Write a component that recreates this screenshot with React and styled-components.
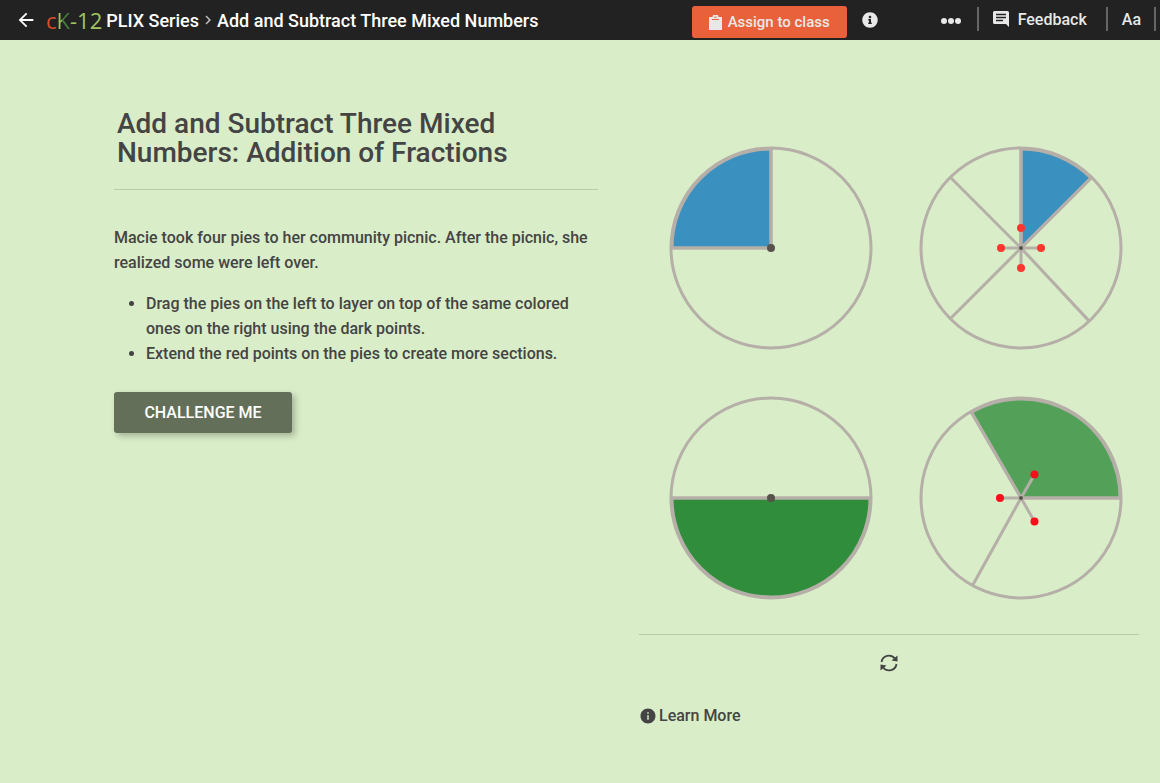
import React from 'react'
import styled, { createGlobalStyle } from 'styled-components'
import { FaInfoCircle } from 'react-icons/fa'
import { MdArrowBack, MdChevronRight, MdInfo } from 'react-icons/md'

const RADIUS = 100

const pies = [
    { id : 'blue-quarter', x : 132, y : 124, fill : '#3a90bf', from : 90, to : 180, spokes : [90, 180], handles : [], dot : 4 },
    { id : 'blue-eighth', x : 382, y : 124, fill : '#3a90bf', from : 45, to : 90, spokes : [45, 90, 135, 225, 313], handles : [0, 90, 180, 270], reach : 20, handleColor : '#fd372d', dot : 2 },
    { id : 'green-half', x : 132, y : 374, fill : '#308d3c', from : 180, to : 360, spokes : [0, 180], handles : [], dot : 4 },
    { id : 'green-third', x : 382, y : 374, fill : '#53a159', from : 0, to : 120, spokes : [0, 120, 241], handles : [60, 180, 300], reach : 27, handleColor : '#fd0d1b', dot : 2 },
]

const polar = (angle, radius) => {
    const rad = angle * Math.PI / 180
    return { x : Math.cos(rad) * radius, y : -Math.sin(rad) * radius }
}

const Pie = ({ pie }) => {
    const inner = RADIUS - 1
    const start = polar(pie.from, inner)
    const end = polar(pie.to, inner)
    const handles = pie.handles.map(angle => polar(angle, pie.reach === 27 && angle === 180 ? 21 : pie.reach))

    return (
        <g transform={`translate(${pie.x} ${pie.y})`}>
            <path
                d={`M0 0L${start.x} ${start.y}A${inner} ${inner} 0 0 0 ${end.x} ${end.y}Z`}
                fill={pie.fill}
                stroke="#b5afa8"
                strokeWidth="3"
            />
            <circle r={RADIUS} fill="none" stroke="#b5afa8" strokeWidth="3" />
            {pie.spokes.map(angle => {
                const tip = polar(angle, RADIUS)
                return <line key={angle} x2={tip.x} y2={tip.y} stroke="#b5afa8" strokeWidth="3" />
            })}
            {handles.map((tip, i) => (
                <line key={i} x2={tip.x} y2={tip.y} stroke="#b5afa8" strokeWidth="3" />
            ))}
            {handles.map((tip, i) => (
                <circle key={i} cx={tip.x} cy={tip.y} r="4" fill={pie.handleColor} />
            ))}
            <circle r={pie.dot} fill="#57534a" />
        </g>
    )
}

const App = () => (
    <>
        <GlobalStyle />
        <TopBar>
            <Crumbs>
                <IconLink href="#back" aria-label="Back"><MdArrowBack size={22} /></IconLink>
                <Logo href="#home">
                    <span className="c">c</span><span className="k">K</span>-12
                </Logo>
                <CrumbLink href="#series">PLIX Series</CrumbLink>
                <MdChevronRight className="chevron" size={18} />
                <CrumbLink href="#lesson">Add and Subtract Three Mixed Numbers</CrumbLink>
            </Crumbs>
            <AssignButton type="button">
                <svg width="13" height="15" viewBox="0 0 13 15">
                    <path d="M0 2h3.500a3 2.500 0 0 1 6 0H13v13H0z" fill="currentColor" />
                    <path d="M3 4.500h7M5.300 2.200h2.400" stroke="#e8613a" strokeWidth="1" />
                </svg>
                Assign to class
            </AssignButton>
            <InfoButton type="button" aria-label="Info"><FaInfoCircle size={16} /></InfoButton>
            <Tools>
                <MoreButton type="button" aria-label="More">
                    <svg width="22" height="8" viewBox="0 0 22 8" fill="currentColor">
                        <circle cx="4" cy="4" r="3" />
                        <circle cx="11" cy="4" r="3" />
                        <circle cx="18" cy="4" r="3" />
                    </svg>
                </MoreButton>
                <FeedbackButton type="button">
                    <svg width="16" height="16" viewBox="0 0 16 16">
                        <path d="M1.500 0h13A1.500 1.500 0 0 1 16 1.500V16l-3-3H1.500A1.500 1.500 0 0 1 0 11.500v-10A1.500 1.500 0 0 1 1.500 0z" fill="currentColor" />
                        <path d="M3 3.500h10M3 6.500h10M3 9.500h7" stroke="#222" strokeWidth="1.300" />
                    </svg>
                    Feedback
                </FeedbackButton>
                <TextSizeButton type="button">Aa</TextSizeButton>
            </Tools>
        </TopBar>
        <Main>
            <Lesson>
                <Title>Add and Subtract Three Mixed Numbers: Addition of Fractions</Title>
                <Intro>
                    Macie took four pies to her community picnic. After the picnic, she realized some were left over.
                </Intro>
                <Steps>
                    <li>Drag the pies on the left to layer on top of the same colored ones on the right using the dark points.</li>
                    <li>Extend the red points on the pies to create more sections.</li>
                </Steps>
                <ChallengeButton type="button">CHALLENGE ME</ChallengeButton>
            </Lesson>
            <Activity>
                <Board viewBox="0 0 500 510" role="img" aria-label="Four fraction pies">
                    {pies.map(pie => <Pie key={pie.id} pie={pie} />)}
                </Board>
                <Controls>
                    <ResetButton type="button" aria-label="Reset">
                        <svg width="18" height="18" viewBox="0 0 18 18">
                            <path d="M1.500 8A7.500 7.500 0 0 1 14.800 4.500M16.500 10A7.500 7.500 0 0 1 3.200 13.500" fill="none" stroke="currentColor" strokeWidth="1.800" />
                            <path d="M17.500 1.500v6l-6-1zM.5 16.500v-6l6 1z" fill="currentColor" />
                        </svg>
                    </ResetButton>
                </Controls>
                <LearnMore href="#learn-more">
                    <MdInfo size={18} />
                    Learn More
                </LearnMore>
            </Activity>
        </Main>
    </>
)

export default App


const GlobalStyle = createGlobalStyle`
*{
    box-sizing: border-box;
}
body{
    margin: 0;
    background-color: #d9edc8;
    color: #444;
    font-family: Roboto, "Liberation Sans", sans-serif;
    font-size: 16px;
    font-weight: 500;
    line-height: 25px;
}
button{
    border: 0;
    padding: 0;
    background: none;
    color: inherit;
    font: inherit;
    cursor: pointer;
}
a{
    color: inherit;
    text-decoration: none;
}
svg{
    display: block;
    flex: none;
}
`

const TopBar = styled.header`
display: flex;
align-items: center;
height: 40px;
padding-left: 15px;
background-color: #222;
color: #e8e8e8;
white-space: nowrap;
`

const Crumbs = styled.nav`
display: flex;
align-items: center;
flex: 1;
.chevron{
    color: #bbb;
}
`

const IconLink = styled.a`
color: #fff;
`

const Logo = styled.a`
margin: 0 4px 0 9px;
color: #a2c462;
font-family: "Open Sans", sans-serif;
font-size: 22px;
font-weight: 400;
.c{
    color: #d6502b;
}
.k{
    background: linear-gradient(90deg, #a2c462 5px, #45803a 5px);
    background-clip: text;
    color: transparent;
}
`

const CrumbLink = styled.a`
color: #fff;
font-size: 18px;
`

const AssignButton = styled.button`
display: flex;
align-items: center;
justify-content: center;
gap: 6px;
width: 155px;
height: 32px;
margin-top: 4px;
border-radius: 3px;
background-color: #e8613a;
font-size: 15px;
`

const InfoButton = styled.button`
margin: 0 62px 0 15px;
`

const Tools = styled.div`
display: flex;
align-items: center;
padding: 0 4px 2px 0;
button{
    height: 24px;
    border-right: 2px solid #666;
}
`

const MoreButton = styled.button`
padding: 4px 15px 0 0;
`

const FeedbackButton = styled.button`
display: flex;
align-items: center;
gap: 9px;
padding: 0 19px 0 14px;
`

const TextSizeButton = styled.button`
padding: 0 13px 0 14px;
`

const Main = styled.main`
display: grid;
grid-template-columns: 484fr 500fr;
gap: 41px;
padding: 69px 21px 0 114px;
`

const Lesson = styled.section`
display: flex;
flex-direction: column;
align-items: flex-start;
`

const Title = styled.h1`
width: 100%;
margin: 0 0 35px;
padding: 0 3px 22px;
border-bottom: 1px solid #b7cda8;
font-size: 28px;
font-weight: 500;
line-height: 29px;
`

const Intro = styled.p`
margin: 0 0 16px;
`

const Steps = styled.ul`
margin: 0 0 26px;
padding-left: 32px;
`

const ChallengeButton = styled.button`
width: 178px;
height: 41px;
border-radius: 3px;
background-color: #646f5a;
box-shadow: 3px 3px 6px rgba(0, 0, 0, .25);
color: #fff;
`

const Activity = styled.section`
padding-top: 15px;
`

const Board = styled.svg`
width: 100%;
`

const Controls = styled.div`
display: flex;
justify-content: center;
padding: 19px 0 31px;
border-top: 1px solid #b7cda8;
`

const ResetButton = styled.button`
display: block;
`

const LearnMore = styled.a`
display: inline-flex;
align-items: center;
gap: 2px;
`
